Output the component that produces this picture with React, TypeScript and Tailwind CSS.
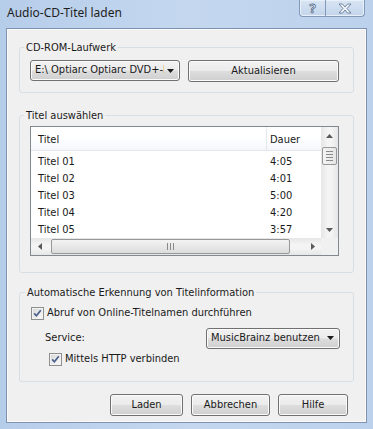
import React from 'react';

const tracks = [
  { name: 'Titel 01', len: '4:05' },
  { name: 'Titel 02', len: '4:01' },
  { name: 'Titel 03', len: '5:00' },
  { name: 'Titel 04', len: '4:20' },
  { name: 'Titel 05', len: '3:57' },
];

function Arrow({ dir }: { dir: 'up' | 'down' | 'left' | 'right' }) {
  const pts = {
    up: '0,4 3.5,0 7,4',
    down: '0,0 7,0 3.5,4',
    left: '4,0 4,7 0,3.5',
    right: '0,0 0,7 4,3.5',
  }[dir];
  const w = dir === 'up' || dir === 'down' ? 7 : 4;
  const h = dir === 'up' || dir === 'down' ? 4 : 7;
  return (
    <svg width={w} height={h} viewBox={`0 0 ${w} ${h}`}>
      <polygon points={pts} fill="#5a5a5a" />
    </svg>
  );
}

function Btn({ children, className }: { children: React.ReactNode; className: string }) {
  return (
    <button
      type="button"
      className={`h-[22px] rounded-[3px] border border-[#707070] bg-[linear-gradient(#f2f2f2_0%,#ebebeb_48%,#dddddd_52%,#cfcfcf_100%)] text-[11px] text-[#1a1a1a] shadow-[inset_0_0_0_1px_#fbfbfb] ${className}`}
    >
      {children}
    </button>
  );
}

function Combo({ text, className }: { text: string; className: string }) {
  return (
    <div
      className={`flex h-[21px] items-center rounded-[3px] border border-[#707070] bg-[linear-gradient(#f2f2f2_0%,#ebebeb_48%,#dddddd_52%,#cfcfcf_100%)] pl-[4px] pr-[5px] text-[11px] text-[#1a1a1a] shadow-[inset_0_0_0_1px_#fbfbfb] ${className}`}
    >
      <span className="flex-1 overflow-hidden whitespace-nowrap">{text}</span>
      <svg width="7" height="4" viewBox="0 0 7 4" className="ml-[3px] shrink-0">
        <polygon points="0,0 7,0 3.5,4" fill="#1a1a1a" />
      </svg>
    </div>
  );
}

function CheckBox() {
  return (
    <span className="flex h-[13px] w-[13px] shrink-0 items-center justify-center border border-[#8e8f8f] bg-[linear-gradient(135deg,#d6d6d6,#fdfdfd)] shadow-[inset_0_0_0_1px_#f2f2f2]">
      <svg width="9" height="9" viewBox="0 0 9 9">
        <path d="M1.2 4.4 L3.4 6.8 L7.8 1.2" stroke="#4b5f8d" strokeWidth="1.7" fill="none" />
      </svg>
    </span>
  );
}

function ListView() {
  return (
    <div className="flex h-[130px] w-[309px] flex-col border border-[#828790] bg-white">
      <div className="flex min-h-0 flex-1">
        <div className="flex min-w-0 flex-1 flex-col overflow-hidden">
          <div className="flex h-[24px] border-b border-[#e2e6eb] bg-[linear-gradient(#ffffff_0%,#ffffff_45%,#f4f7fa_100%)]">
            <div className="flex w-[236px] items-center border-r border-[#e3e8ee] pl-[7px] pt-[3px]">Titel</div>
            <div className="flex items-center pl-[3px] pt-[3px]">Dauer</div>
          </div>
          <div className="pt-[1px]">
            {tracks.map((t) => (
              <div key={t.name} className="flex h-[17px] items-center pt-[4px]">
                <div className="w-[236px] pl-[7px]">{t.name}</div>
                <div className="pl-[3px]">{t.len}</div>
              </div>
            ))}
          </div>
        </div>
        <div className="flex w-[17px] flex-col bg-[linear-gradient(90deg,#e6e6e6,#f4f4f4_40%,#f4f4f4_60%,#e6e6e6)]">
          <div className="flex h-[17px] items-center justify-center">
            <Arrow dir="up" />
          </div>
          <div className="mx-[1px] mt-[3px] flex h-[18px] flex-col items-center justify-center gap-[2px] rounded-[2px] border border-[#979797] bg-[linear-gradient(90deg,#f3f3f3,#e6e6e6)]">
            <span className="block h-[1px] w-[7px] bg-[#8a8a8a]" />
            <span className="block h-[1px] w-[7px] bg-[#8a8a8a]" />
            <span className="block h-[1px] w-[7px] bg-[#8a8a8a]" />
            <span className="block h-[1px] w-[7px] bg-[#8a8a8a]" />
          </div>
          <div className="flex-1" />
          <div className="flex h-[17px] items-center justify-center">
            <Arrow dir="down" />
          </div>
        </div>
      </div>
      <div className="flex h-[17px]">
        <div className="flex flex-1 items-center bg-[linear-gradient(#e6e6e6,#f4f4f4_40%,#f4f4f4_60%,#e6e6e6)]">
          <div className="flex h-[17px] w-[17px] items-center justify-center">
            <Arrow dir="left" />
          </div>
          <div className="ml-[3px] mr-[14px] flex h-[15px] flex-1 items-center justify-center gap-[2px] rounded-[2px] border border-[#979797] bg-[linear-gradient(#f3f3f3,#dcdcdc)]">
            <span className="block h-[7px] w-[1px] bg-[#8a8a8a]" />
            <span className="block h-[7px] w-[1px] bg-[#8a8a8a]" />
            <span className="block h-[7px] w-[1px] bg-[#8a8a8a]" />
          </div>
          <div className="flex h-[17px] w-[17px] items-center justify-center">
            <Arrow dir="right" />
          </div>
        </div>
        <div className="w-[17px] bg-[#f0f0f0]" />
      </div>
    </div>
  );
}

export default function App() {
  return (
    <div className="flex h-[429px] w-[373px] flex-col bg-[linear-gradient(90deg,#b6cdea,#c4d7ef_50%,#bcd1ec)] font-['DejaVu_Sans_Condensed','Liberation_Sans',sans-serif] text-[11px] text-[#1a1a1a]">
      {/* title bar */}
      <div className="flex h-[28px] shrink-0 items-start justify-between">
        <div className="pl-[7px] pt-[3px] font-['Noto_Sans',sans-serif] text-[12px] leading-[20px] text-[#1e1e1e]">
          Audio-CD-Titel laden
        </div>
        <div className="mr-[8px] flex h-[17px] rounded-b-[4px] border border-t-0 border-[#8399b8] bg-[linear-gradient(#d8e4f3,#c3d5ec)] shadow-[inset_0_0_0_1px_#e8f0fa]">
          <div className="flex w-[26px] items-center justify-center border-r border-[#8399b8] font-['Noto_Sans',sans-serif] text-[13px] font-bold leading-none text-[#eef3fa] [-webkit-text-stroke:0.8px_#5b6e8a]">
            ?
          </div>
          <div className="flex w-[38px] items-center justify-center">
            <svg width="14" height="11" viewBox="0 0 14 11">
              <path
                d="M1 1 H4.5 L7 4 L9.5 1 H13 L9 5.5 L13 10 H9.5 L7 7 L4.5 10 H1 L5 5.5 Z"
                fill="#eef3fa"
                stroke="#5b6e8a"
                strokeWidth="0.8"
              />
            </svg>
          </div>
        </div>
      </div>

      {/* client area */}
      <div className="mx-[6px] mb-[6px] flex flex-1 flex-col border border-[#7f93b1] bg-[#f0f0f0] px-[12px] shadow-[inset_0_0_0_1px_#fafafa]">
        <fieldset className="mt-[11px] rounded-[3px] border border-[#d5dfe5] pb-[10px] pl-[10px] pr-[14px] pt-[5px]">
          <legend className="-ml-[6px] px-[2px] leading-[15px]">CD-ROM-Laufwerk</legend>
          <div className="flex items-start gap-[8px]">
            <Combo text="E:\ Optiarc Optiarc DVD+-RW AD-7561S" className="w-[150px]" />
            <Btn className="w-[151px]">Aktualisieren</Btn>
          </div>
        </fieldset>

        <fieldset className="mt-[15px] rounded-[3px] border border-[#d5dfe5] pb-[16px] pl-[10px] pr-[13px] pt-[3px]">
          <legend className="-ml-[6px] px-[2px] leading-[15px]">Titel auswählen</legend>
          <ListView />
        </fieldset>

        <fieldset className="mt-[12px] rounded-[3px] border border-[#d5dfe5] pb-[14px] pl-[11px] pr-[13px] pt-[6px]">
          <legend className="-ml-[6px] px-[2px] leading-[15px]">Automatische Erkennung von Titelinformation</legend>
          <div className="flex h-[15px] items-center gap-[3px]">
            <CheckBox />
            <span>Abruf von Online-Titelnamen durchführen</span>
          </div>
          <div className="mt-[7px] flex h-[20px] items-center justify-between">
            <span className="pl-[14px]">Service:</span>
            <Combo text="MusicBrainz benutzen" className="w-[134px]" />
          </div>
          <div className="mt-[4px] flex h-[15px] items-center gap-[3px] pl-[18px]">
            <CheckBox />
            <span>Mittels HTTP verbinden</span>
          </div>
        </fieldset>

        <div className="mt-[12px] flex justify-end gap-[8px] pr-[6px]">
          <Btn className="w-[73px]">Laden</Btn>
          <Btn className="w-[79px]">Abbrechen</Btn>
          <Btn className="w-[70px]">Hilfe</Btn>
        </div>
      </div>
    </div>
  );
}
